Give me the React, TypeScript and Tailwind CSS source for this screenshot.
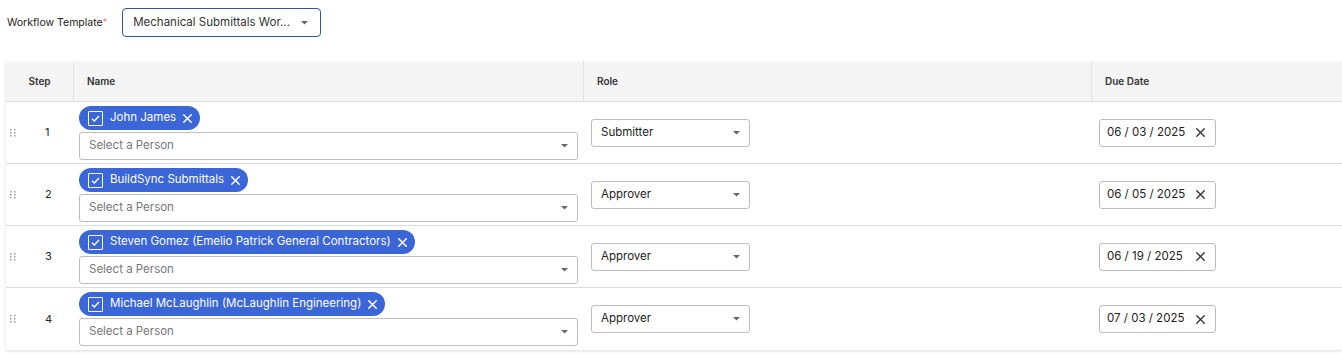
import { X } from "lucide-react";

const rows = [
  { step: 1, person: "John James", role: "Submitter", date: "06 / 03 / 2025" },
  { step: 2, person: "BuildSync Submittals", role: "Approver", date: "06 / 05 / 2025" },
  { step: 3, person: "Steven Gomez (Emelio Patrick General Contractors)", role: "Approver", date: "06 / 19 / 2025" },
  { step: 4, person: "Michael McLaughlin (McLaughlin Engineering)", role: "Approver", date: "07 / 03 / 2025" },
];

const Caret = () => (
  <svg width="7" height="4" viewBox="0 0 7 4" className="shrink-0">
    <path d="M0 0h7L3.5 3.5z" fill="#666" />
  </svg>
);

const DragHandle = () => (
  <svg width="6" height="8" viewBox="0 0 6 8" className="shrink-0">
    {[0, 3, 6].map((y) =>
      [0, 4].map((x) => <rect key={`${x}-${y}`} x={x} y={y} width="1.5" height="1.5" fill="#9a9a9a" />)
    )}
  </svg>
);

const PersonChip = ({ name }: { name: string }) => (
  <div className="flex items-center h-[24px] w-fit rounded-full bg-[#3b66d8] pl-[9px] pr-[5px] text-white">
    <span className="flex items-center justify-center w-[15px] h-[15px] border border-white rounded-[1px]">
      <svg width="9" height="7" viewBox="0 0 9 7">
        <path d="M1 3.8 3.3 6 8 1" stroke="white" strokeWidth="1.4" fill="none" />
      </svg>
    </span>
    <span className="ml-[7px] text-[11.5px] leading-none">{name}</span>
    <X size={15} strokeWidth={2.4} className="ml-[4px]" />
  </div>
);

export default function App() {
  return (
    <div className="bg-white min-h-[354px] font-['Inter',sans-serif] text-[#222]">
      <div className="flex items-center pt-[8px] pl-[7px]">
        <span className="text-[10.5px] text-[#222] whitespace-nowrap">
          Workflow Template<span className="text-[#e8735a] text-[9px] align-top">*</span>
        </span>
        <div className="ml-[15px] flex items-center justify-between w-[199px] h-[29px] border-[1.5px] border-[#2f52b0] rounded-[4px] pl-[10px] pr-[12px]">
          <span className="text-[11.5px] text-[#333] whitespace-nowrap">Mechanical Submittals Wor...</span>
          <Caret />
        </div>
      </div>

      <div className="mt-[25px] ml-[6px] shadow-[0_1px_3px_rgba(0,0,0,0.15)] overflow-hidden">
        <div className="flex h-[40px] bg-[#f5f5f5] border-b border-[#dcdcdc] text-[10px] font-semibold text-[#333]">
          <div className="w-[68px] flex items-center justify-center border-r border-[#e2e2e2]">Step</div>
          <div className="w-[510px] flex items-center pl-[13px] border-r border-[#e2e2e2]">Name</div>
          <div className="w-[508px] flex items-center pl-[13px] border-r border-[#e2e2e2]">Role</div>
          <div className="flex-1 flex items-center pl-[13px]">Due Date</div>
        </div>
        {rows.map((r) => (
          <div key={r.step} className="flex h-[62px] border-b border-[#dcdcdc] last:border-b-0">
            <div className="w-[68px] flex items-center pl-[4px]">
              <DragHandle />
              <span className="ml-[29px] text-[11px] text-[#222]">{r.step}</span>
            </div>
            <div className="w-[510px] flex flex-col gap-[2px] pt-[4px] pl-[5px] pr-[6px]">
              <PersonChip name={r.person} />
              <div className="flex items-center justify-between h-[28px] border border-[#bdbdbd] rounded-[3px] pl-[9px] pr-[9px]">
                <span className="text-[11.5px] text-[#777]">Select a Person</span>
                <Caret />
              </div>
            </div>
            <div className="w-[508px] flex items-center pl-[7px]">
              <div className="flex items-center justify-between w-[159px] h-[28px] border border-[#bdbdbd] rounded-[3px] pl-[9px] pr-[9px]">
                <span className="text-[11.5px] text-[#222]">{r.role}</span>
                <Caret />
              </div>
            </div>
            <div className="flex-1 flex items-center pl-[7px]">
              <div className="flex items-center justify-between w-[117px] h-[28px] border border-[#bdbdbd] rounded-[3px] pl-[7px] pr-[7px]">
                <span className="text-[11.5px] text-[#222]">{r.date}</span>
                <X size={15} strokeWidth={2.2} className="text-[#333]" />
              </div>
            </div>
          </div>
        ))}
      </div>
    </div>
  );
}
